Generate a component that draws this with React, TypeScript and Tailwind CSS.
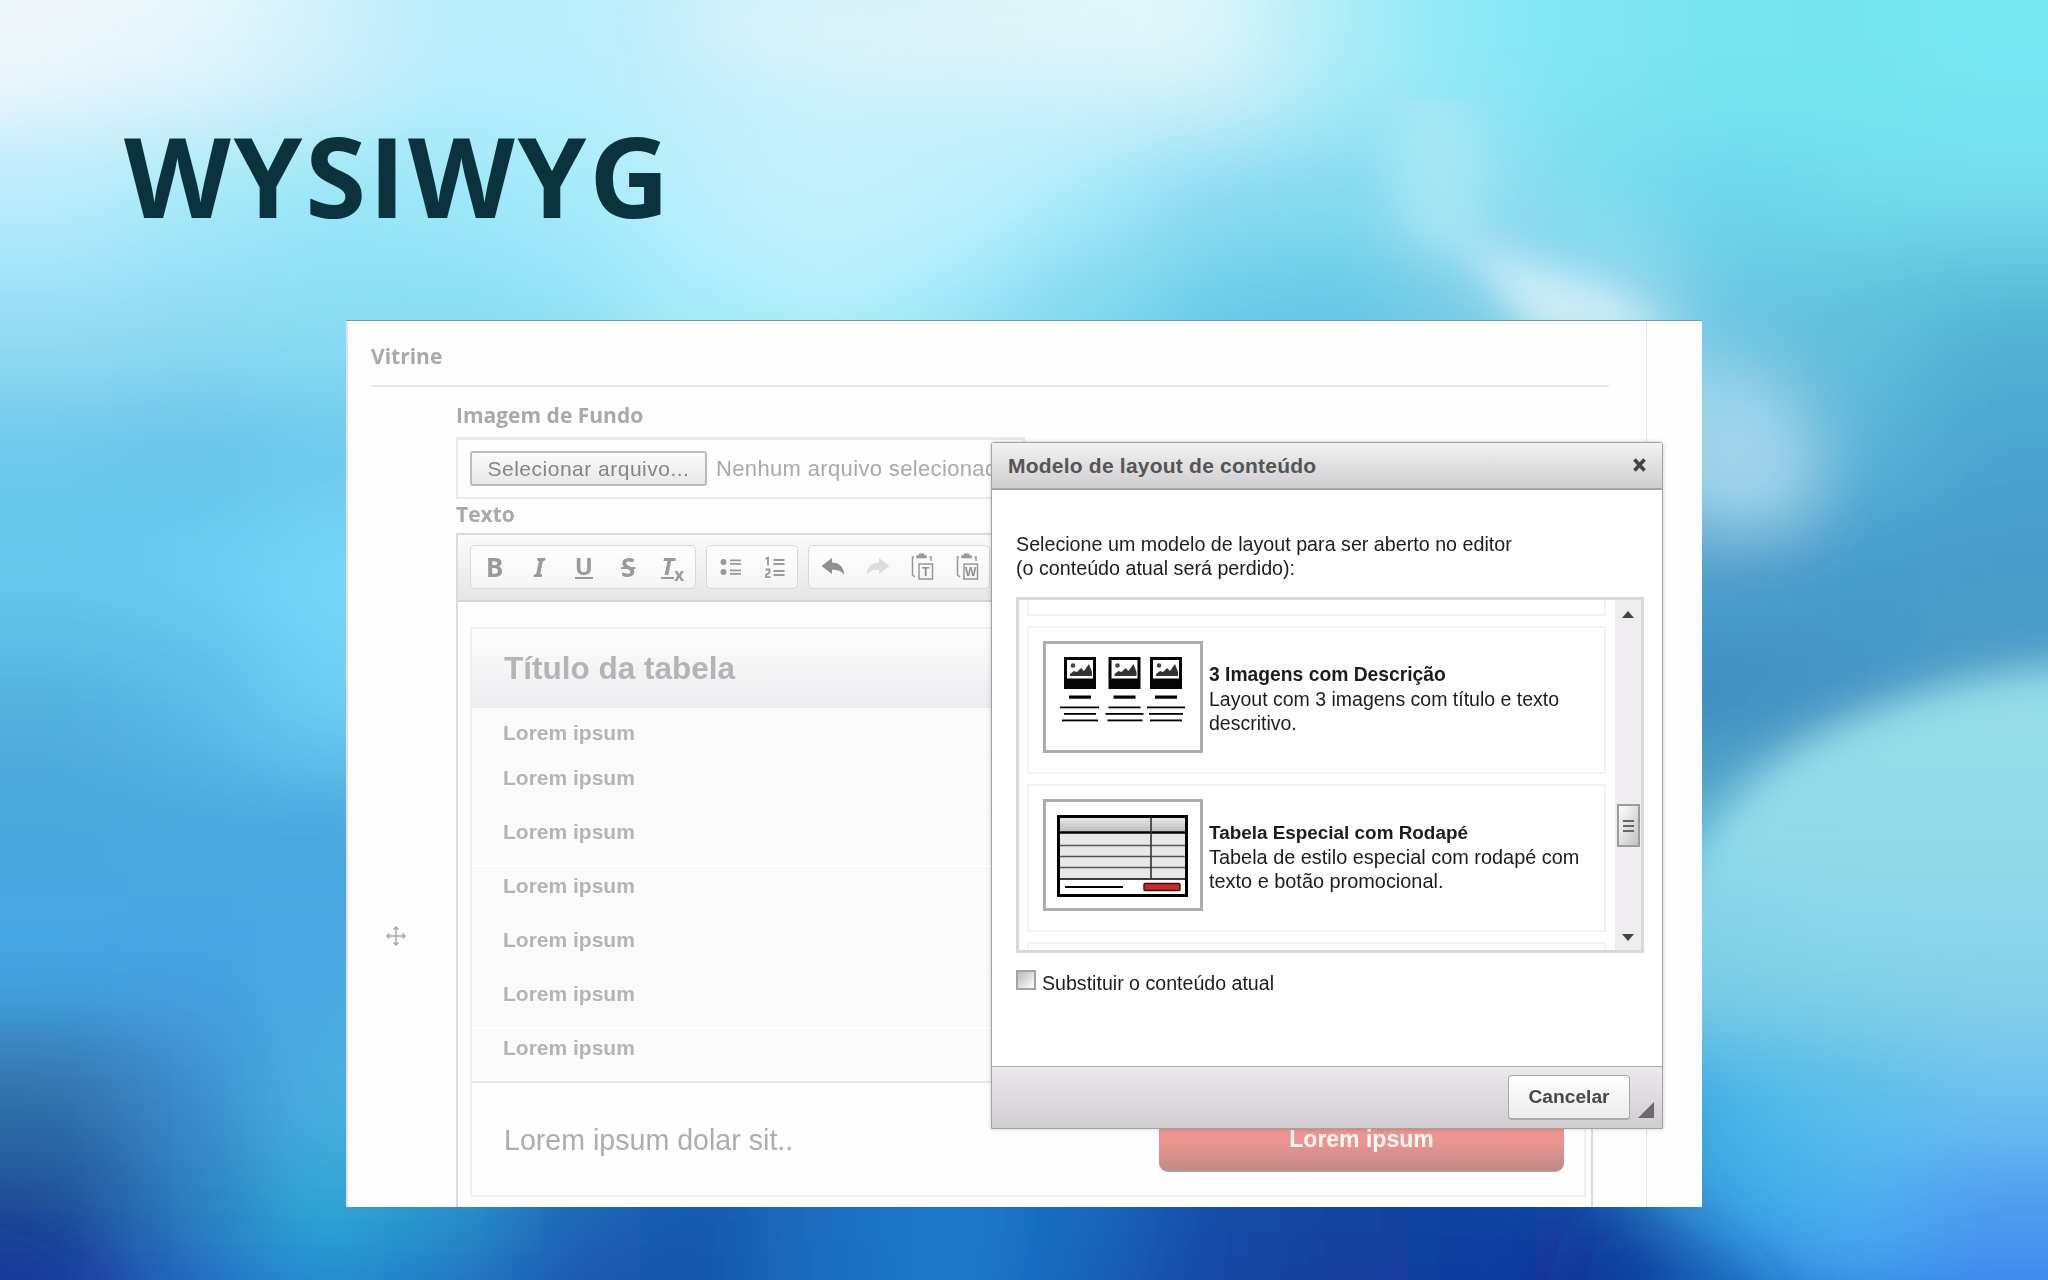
import type { ReactNode } from "react";

const mesh = [
  ["#e8f5fb", "#e2f5fc", "#d2f1fb", "#b8edfb", "#b9effc", "#c4f0fb", "#d0f2f9", "#d6f2f8", "#dcf5f9", "#d8f5fa", "#aaecf6", "#8ce8f4", "#80e6f2", "#76e6f1", "#74e6f1", "#76e8f4"],
  ["#b8ecfb", "#a6e9f8", "#98e6f5", "#9ce7f8", "#a6eafb", "#bcf0fd", "#c6f4fd", "#baf0fc", "#a4e9f8", "#88dcf2", "#82dcef", "#98e2f0", "#78daee", "#6cd6ec", "#70dcec", "#74dcee"],
  ["#96def4", "#90dcf4", "#8cdff4", "#88def4", "#90e2f4", "#a8ecfa", "#a8ecf8", "#96e4f6", "#7cd8ee", "#66cae8", "#62c6e6", "#78cce6", "#a0dcee", "#68c4e2", "#60c0dc", "#54b4d4"],
  ["#6cc8ec", "#66c2e8", "#6cc8ec", "#70ccee", "#70ccee", "#80d4ee", "#80d4ee", "#80d4ee", "#70ccee", "#60c0e0", "#60c0e0", "#60c0e0", "#80cce4", "#94d2e8", "#5cb4d9", "#4ca4d0"],
  ["#66c8ec", "#6cccf2", "#76d6f9", "#78d8fa", "#70ccee", "#70ccee", "#70ccee", "#70ccee", "#70ccee", "#60c0e0", "#60c0e0", "#50a0cc", "#4ca0cc", "#4c9ecc", "#449aca", "#479ac8"],
  ["#54b0de", "#5cb8e6", "#6ccff4", "#6ccff4", "#60c0e0", "#60c0e0", "#60c0e0", "#60c0e0", "#60c0e0", "#50a0cc", "#50a0cc", "#4090c4", "#3c8cc0", "#3c8cc0", "#4494c4", "#50a0c8"],
  ["#48a4da", "#4aa8de", "#46a6de", "#46a6de", "#46a6de", "#46a6de", "#46a6de", "#46a6de", "#46a6de", "#46a6de", "#46a6de", "#4090c4", "#4090c4", "#62b8d4", "#88d4e4", "#8cd8e6"],
  ["#44a8e4", "#46a4e2", "#4aa8e2", "#4aa8e2", "#46a6de", "#46a6de", "#46a6de", "#46a6de", "#46a6de", "#46a6de", "#46a6de", "#46a6de", "#70c8e0", "#78cce6", "#80d0e8", "#88ceea"],
  ["#3272aa", "#3e8ccc", "#4cb0e2", "#40b4dc", "#2c88c4", "#1c68b8", "#1c74c4", "#1c7ccc", "#1c74c4", "#1858b0", "#144ca8", "#144ca8", "#2c84cc", "#48b8e8", "#5cc0e8", "#70c4ee"],
  ["#1e4894", "#2a7cbc", "#2ca8d4", "#2890c8", "#1a64b4", "#1556aa", "#1a70c4", "#1a7acc", "#1666bc", "#144ca8", "#12449e", "#1140a0", "#1240a0", "#38a8e4", "#4cb0ee", "#4c98f0"],
  ["#1a2ea2", "#1c54c4", "#1a70cc", "#1a64bc", "#144aac", "#1454ac", "#1a6cc4", "#1a78cc", "#145cb8", "#1040a4", "#0f3a9c", "#0f34a0", "#0c2c94", "#1858c8", "#2870e4", "#2f78ec"],
];

const Backdrop = () => (
  <svg className="absolute inset-0" width="2048" height="1280" viewBox="0 0 2048 1280">
    <defs>
      <filter id="soft" filterUnits="userSpaceOnUse" x="-400" y="-400" width="2848" height="2080">
        <feGaussianBlur stdDeviation="48" />
      </filter>
      <filter id="haze" filterUnits="userSpaceOnUse" x="-400" y="-400" width="2848" height="2080">
        <feGaussianBlur stdDeviation="32" />
      </filter>
      <filter id="edge" filterUnits="userSpaceOnUse" x="1000" y="100" width="1400" height="1400">
        <feGaussianBlur stdDeviation="20" />
      </filter>
      <linearGradient id="leaf" x1="0" y1="0" x2="0" y2="1">
        <stop offset="0" stopColor="#98dfe6" />
        <stop offset="0.45" stopColor="#92dbe8" />
        <stop offset="1" stopColor="#80d0e8" stopOpacity="0" />
      </linearGradient>
    </defs>
    <g filter="url(#soft)">
      {Array.from({ length: 15 }, (_, r) => r - 2).map((r) =>
        Array.from({ length: 20 }, (_, c) => c - 2).map((c) => (
          <rect
            key={`${r}-${c}`}
            x={c * 128}
            y={r * 128}
            width="129"
            height="129"
            fill={mesh[Math.min(Math.max(r, 0), 10)][Math.min(Math.max(c, 0), 15)]}
          />
        )),
      )}
    </g>
    <g filter="url(#haze)">
      <path d="M-60 -60 H360 C200 10 80 40 -60 130 Z" fill="#f2f8fb" opacity="0.55" />
      <path d="M700 -20 C900 20 1080 0 1250 -60 L1180 40 C1000 90 820 90 690 40 Z" fill="#eaf6f9" opacity="0.5" />
      <path d="M690 60 H1150 C1080 180 980 240 900 320 H790 Z" fill="#c0f2fd" opacity="0.45" />
      <path d="M1690 370 C1800 390 1850 460 1790 530 L1680 510 Z" fill="#b0dcee" opacity="0.65" />
      <path d="M-60 1290 L-60 1240 L160 1300 Z" fill="#182898" opacity="0.5" />
      <path d="M1600 1220 L1700 1240 L1800 1310 L1560 1310 Z" fill="#0c2c94" opacity="0.5" />
    </g>
    <g filter="url(#edge)">
      <ellipse cx="1435" cy="170" rx="45" ry="80" fill="#b0e9f4" opacity="0.6" />
      <path d="M1430 210 C1520 285 1600 270 1680 335 L1540 335 Z" fill="#dcf3f9" opacity="0.9" />
      <path d="M1670 920 C1710 770 1870 672 2120 664 V1080 H1670 Z" fill="url(#leaf)" />
    </g>
  </svg>
);

const ToolGroup = ({ children, className = "" }: { children: ReactNode; className?: string }) => (
  <div
    className={`flex h-[44px] shrink-0 items-center rounded-[5px] border border-[#d8d8d8] bg-linear-to-b from-white to-[#f4f4f4] ${className}`}
  >
    {children}
  </div>
);

const Tool = ({ children }: { children: ReactNode }) => (
  <div className="flex h-full w-[44.5px] shrink-0 items-center justify-center font-['Noto_Sans',sans-serif] text-[26px] leading-none font-bold text-[#9a9a9a]">
    {children}
  </div>
);

const UndoArrow = ({ fill, flip }: { fill: string; flip?: boolean }) => (
  <svg width="24" height="20" viewBox="0 0 24 20" className={flip ? "-scale-x-100" : ""}>
    <path d="M0.5 9 L11 1 V5.5 C18 5.5 23 10 23 17.5 C20 13.5 16 12.5 11 12.8 V17 Z" fill={fill} />
  </svg>
);

const Paste = ({ letter }: { letter: string }) => (
  <svg width="24" height="28" viewBox="0 0 24 28" fill="none" stroke="#969696" strokeWidth="1.5">
    <path d="M4 4 H2.5 V22 L5 24 M19.5 4 H21 V8" />
    <path d="M7 4.5 V3 H9.5 V1.2 H13.5 V3 H16 V4.5 Z" fill="#9a9a9a" />
    <rect x="9" y="11" width="13.5" height="15" />
    <text
      x="15.75"
      y="23"
      textAnchor="middle"
      fontSize="12"
      fontWeight="bold"
      fontFamily="Liberation Sans, sans-serif"
      fill="#8f8f8f"
      stroke="none"
    >
      {letter}
    </text>
  </svg>
);

const Toolbar = () => (
  <div className="flex h-[67px] gap-[10px] overflow-hidden border-b-2 border-[#d4d4d4] bg-linear-to-b from-[#fafafa] to-[#e6e6e6] pt-[10px] pl-[12px]">
    <ToolGroup className="w-[226px] pl-[1.5px]">
      <Tool>B</Tool>
      <Tool>
        <span className="italic">I</span>
      </Tool>
      <Tool>
        <span className="border-b-2 border-[#9a9a9a] text-[24px] leading-[22px]">U</span>
      </Tool>
      <Tool>
        <span className="line-through decoration-2">S</span>
      </Tool>
      <Tool>
        <span className="border-b-2 border-[#9a9a9a] text-[24px] leading-[22px] italic">T</span>
        <span className="mt-[14px] text-[17px]">x</span>
      </Tool>
    </ToolGroup>
    <ToolGroup className="w-[92px] pl-[1.5px]">
      <Tool>
        <svg width="22" height="20" viewBox="0 0 22 20" fill="#999">
          <circle cx="3.5" cy="5" r="3" />
          <circle cx="3.5" cy="15" r="3" />
          <path d="M10 2.5h11v1.8H10zM10 6h11v1.8H10zM10 12.5h11v1.8H10zM10 16h11v1.8H10z" />
        </svg>
      </Tool>
      <Tool>
        <svg width="22" height="24" viewBox="0 0 22 24" fill="none" stroke="#999" strokeWidth="1.8">
          <path d="M1.5 4 L4 2.5 V10.5 M1.5 14.5 H5.5 V17.5 L2 20 V22.2 H6.5" />
          <path d="M9.5 5h11M9.5 9h11M9.5 16h11M9.5 20h11" />
        </svg>
      </Tool>
    </ToolGroup>
    <ToolGroup className="w-[182px] pl-[2px]">
      <Tool>
        <UndoArrow fill="#8f8f8f" />
      </Tool>
      <Tool>
        <UndoArrow fill="#dcdcdc" flip />
      </Tool>
      <Tool>
        <Paste letter="T" />
      </Tool>
      <Tool>
        <Paste letter="W" />
      </Tool>
    </ToolGroup>
  </div>
);

const ImagesThumb = () => (
  <svg width="154" height="106" viewBox="0 0 154 106">
    {[18, 62.5, 104].map((x, i) => (
      <g key={x}>
        <rect x={x} y="13" width="32" height="32" fill="#050505" />
        <rect x={x + 3} y="16" width="26" height="18.5" fill="#fff" />
        <path
          d={`M${x + 6} 32 v-2 l4 -3 3 1 4 -4 3 3 5 -7 3 8 v4 z`}
          fill="#333"
        />
        <circle cx={x + 9} cy="21.5" r="2.3" fill="#444" />
        <rect x={x + 5} y="51.5" width="22" height="3.2" />
        <rect x={x + [-4, 0, -3][i]} y="62.5" width={[39, 32, 38][i]} height="1.8" />
        <rect x={x + [0, -3, -1][i]} y="69" width={[32, 38, 34][i]} height="1.8" />
        <rect x={x + [-2, -1, 0][i]} y="75.5" width={[36, 35, 32][i]} height="1.8" />
      </g>
    ))}
  </svg>
);

const TableThumb = () => (
  <svg width="154" height="106" viewBox="0 0 154 106">
    <defs>
      <linearGradient id="thead" x1="0" y1="0" x2="0" y2="1">
        <stop offset="0" stopColor="#e6e6e6" />
        <stop offset="1" stopColor="#bcbcbc" />
      </linearGradient>
    </defs>
    <rect x="12.5" y="14.5" width="128" height="79" fill="#fff" stroke="#000" strokeWidth="3" />
    <rect x="14" y="16" width="125" height="14" fill="url(#thead)" />
    <rect x="14" y="31" width="125" height="46" fill="#e9e7e9" />
    <path d="M14 30.5 H139" stroke="#000" strokeWidth="2.4" />
    <path d="M14 43.5 H139 M14 54.5 H139 M14 65.5 H139" stroke="#555" strokeWidth="1.6" />
    <path d="M14 77 H139" stroke="#000" strokeWidth="1.6" />
    <path d="M105 16 V77" stroke="#333" strokeWidth="1.6" />
    <path d="M19 85 H77" stroke="#000" strokeWidth="2" />
    <rect x="98" y="81.5" width="36" height="7" rx="1" fill="#c62b2b" stroke="#3a1010" strokeWidth="1.4" />
  </svg>
);

const LayoutCard = ({
  thumb,
  title,
  children,
}: {
  thumb: ReactNode;
  title: ReactNode;
  children: ReactNode;
}) => (
  <div className="flex h-[148px] shrink-0 border-2 border-[#f3f1f3] pt-[13px] pl-[14px]">
    <div className="h-[112px] w-[160px] shrink-0 border-3 border-[#aeaaae] bg-white">{thumb}</div>
    <div className="mt-[22px] ml-[6px] leading-[24px] whitespace-nowrap">
      {title}
      {children}
    </div>
  </div>
);

const Dialog = () => (
  <div className="absolute top-[121px] left-[645px] flex h-[687px] w-[672px] flex-col rounded-t-[3px] border border-[#a3a1a3] bg-white text-[19.7px] text-[#1c1c1c] shadow-[0_0_4px_rgba(0,0,0,0.2)]">
    <div className="flex h-[47px] shrink-0 items-center justify-between border-b-2 border-[#a6a4a6] bg-linear-to-b from-[#f3f3f3] to-[#cfcdcf] pr-[15px] pl-[16px]">
      <h2 className="text-[21px] leading-none font-bold tracking-[0.22px] text-[#555]">
        Modelo de layout de conteúdo
      </h2>
      <svg width="15" height="14" viewBox="0 0 15 14" className="mt-[-2px]">
        <path d="M2.5 1.5 L12.5 12.5 M12.5 1.5 L2.5 12.5" stroke="#444" strokeWidth="3.6" />
      </svg>
    </div>
    <div className="flex-1 pt-[42px] pl-[24px]">
      <p className="leading-[24px]">
        Selecione um modelo de layout para ser aberto no editor
        <br />
        (o conteúdo atual será perdido):
      </p>
      <div className="mt-[17px] flex h-[356px] w-[628px] justify-between overflow-hidden border-3 border-[#d9d7d9]">
        <div className="ml-[8px] flex w-[579px] flex-col gap-[10px]">
          <div className="h-[16px] shrink-0 border-2 border-t-0 border-[#f3f1f3]" />
          <LayoutCard
            thumb={<ImagesThumb />}
            title={<h3 className="text-[19.3px] font-bold">3 Imagens com Descrição</h3>}
          >
            <p className="text-[19.5px]">
              Layout com 3 imagens com título e texto
              <br />
              descritivo.
            </p>
          </LayoutCard>
          <LayoutCard
            thumb={<TableThumb />}
            title={<h3 className="text-[18.9px] font-bold">Tabela Especial com Rodapé</h3>}
          >
            <p className="text-[19.9px]">
              Tabela de estilo especial com rodapé com
              <br />
              texto e botão promocional.
            </p>
          </LayoutCard>
          <div className="h-[40px] shrink-0 border-2 border-[#f3f1f3]" />
        </div>
        <div className="flex w-[26px] flex-col items-center bg-[#efedef] pt-[11px]">
          <svg width="12" height="7" viewBox="0 0 12 7">
            <path d="M6 0 L12 7 H0 Z" fill="#444" />
          </svg>
          <div className="mt-[186px] flex h-[43px] w-[23px] flex-col items-center justify-center gap-[3px] border-2 border-[#9d9b9d] bg-linear-to-br from-white to-[#c4c2c4]">
            <div className="h-[2px] w-[11px] bg-[#666]" />
            <div className="h-[2px] w-[11px] bg-[#666]" />
            <div className="h-[2px] w-[11px] bg-[#666]" />
          </div>
          <svg width="12" height="7" viewBox="0 0 12 7" className="mt-[87px]">
            <path d="M0 0 H12 L6 7 Z" fill="#444" />
          </svg>
        </div>
      </div>
      <label className="mt-[17px] flex gap-[6px] text-[19.6px] leading-[26px]">
        <span className="size-[20px] border-2 border-[#a5a3a5] bg-linear-to-br from-[#bdbbbd] to-white" />
        Substituir o conteúdo atual
      </label>
    </div>
    <div className="flex h-[62px] shrink-0 justify-end border-t border-[#a8a6a8] bg-linear-to-b from-[#ebe9eb] to-[#cfcdcf] pt-[8px]">
      <button className="h-[45px] w-[122px] rounded-[4px] border border-b-2 border-[#aaa8aa] bg-linear-to-b from-white to-[#ececec] pb-[1px] text-[19.2px] leading-none font-bold text-[#484848]">
        Cancelar
      </button>
      <svg width="16" height="16" viewBox="0 0 16 16" className="mt-[27px] mr-[8px] ml-[8px]">
        <path d="M16 0 V16 H0 Z" fill="#6c6a6c" />
      </svg>
    </div>
  </div>
);

const labelClass =
  "font-['Open_Sans','Noto_Sans',sans-serif] font-bold leading-[24px] text-[#a9a9a9]";

const App = () => {
  return (
    <div className="relative h-[1280px] w-[2048px] overflow-hidden font-['Liberation_Sans',Arial,sans-serif]">
      <Backdrop />
      <div className="relative pt-[120px]">
        <h1 className="ml-[124px] font-['Open_Sans','Noto_Sans',sans-serif] text-[110.5px] leading-[110px] font-bold tracking-[2.7px] text-[#0b333d]">
          WYSIWYG
        </h1>

        <div className="relative mt-[90px] ml-[346px] h-[887px] w-[1356px] border-t border-[#8495a8] bg-[#fefefe]">
          <div className="flex h-full w-[1301px] flex-col overflow-hidden border-r border-l-2 border-[#e2e0e6] pt-[23px]">
            <h2 className={`${labelClass} ml-[23px] text-[21px]`}>Vitrine</h2>
            <div className="mt-[17px] ml-[23px] h-[2px] w-[1238px] shrink-0 bg-[#e9e9e9]" />

            <div className="ml-[108px] flex w-[1137px] flex-1 flex-col">
              <div className={`${labelClass} mt-[16px] text-[21px]`}>Imagem de Fundo</div>
              <div className="mt-[10px] flex h-[62px] w-[569px] items-center border-2 border-t-3 border-[#ebebeb] pb-[1px] pl-[12px] text-[21px] whitespace-nowrap">
                <div className="flex h-[35px] w-[237px] items-center justify-center rounded-[3px] border-2 border-[#bbb] bg-linear-to-b from-[#fafafa] to-[#e8e8e8] leading-none tracking-[0.5px] text-[#858585]">
                  Selecionar arquivo...
                </div>
                <span className="ml-[9px] pt-[1px] text-[22px] leading-none tracking-[0.35px] text-[#a9a9a9]">
                  Nenhum arquivo selecionado
                </span>
              </div>
              <div className={`${labelClass} mt-[3px] text-[21px]`}>Texto</div>

              <div className="mt-[7px] flex-1 border-x-2 border-t-2 border-[#dcdadc]">
                <Toolbar />
                <div className="mt-[25px] ml-[12px] w-[1116px] border-2 border-[#f0eef0] text-[21px] font-bold text-[#b5b3b5]">
                  <div className="flex h-[79px] items-center bg-linear-to-b from-[#fdfdfd] to-[#edebee] pt-[1px] pl-[32px] text-[31.5px]">
                    Título da tabela
                  </div>
                  <div className="bg-[#fbfafb]">
                    <div className="h-[49px] pt-[13px] pl-[31px] leading-[24px]">Lorem ipsum</div>
                    {[0, 1, 2, 3, 4, 5].map((row) => (
                      <div
                        key={row}
                        className={`h-[54px] border-t-2 pt-[7px] pl-[31px] leading-[24px] ${
                          row === 2 || row === 5 ? "border-white" : "border-[#faf8fa]"
                        }`}
                      >
                        Lorem ipsum
                      </div>
                    ))}
                  </div>
                  <div className="flex h-[114px] items-center justify-between border-t-2 border-[#e9e7e9] pt-[2px] pr-[20px] pl-[32px]">
                    <span className="text-[28.6px] font-normal text-[#aeacae]">
                      Lorem ipsum dolar sit..
                    </span>
                    <div className="flex h-[64px] w-[405px] items-center justify-center rounded-[9px] border-b-2 border-[#b39a96] bg-linear-to-b from-[#ec9490] from-55% to-[#c08a86] text-[23px] text-[#fff8f4]">
                      Lorem ipsum
                    </div>
                  </div>
                </div>
              </div>
            </div>
          </div>

          <svg
            width="20"
            height="20"
            viewBox="0 0 20 20"
            className="absolute top-[605px] left-[40px]"
            fill="none"
            stroke="#a8a8a8"
            strokeWidth="1.5"
          >
            <path d="M10 1 V19 M1 10 H19 M7.5 3.5 L10 1 L12.5 3.5 M7.5 16.5 L10 19 L12.5 16.5 M3.5 7.5 L1 10 L3.5 12.5 M16.5 7.5 L19 10 L16.5 12.5" />
          </svg>

          <Dialog />
        </div>
      </div>
    </div>
  );
};

export default App;
